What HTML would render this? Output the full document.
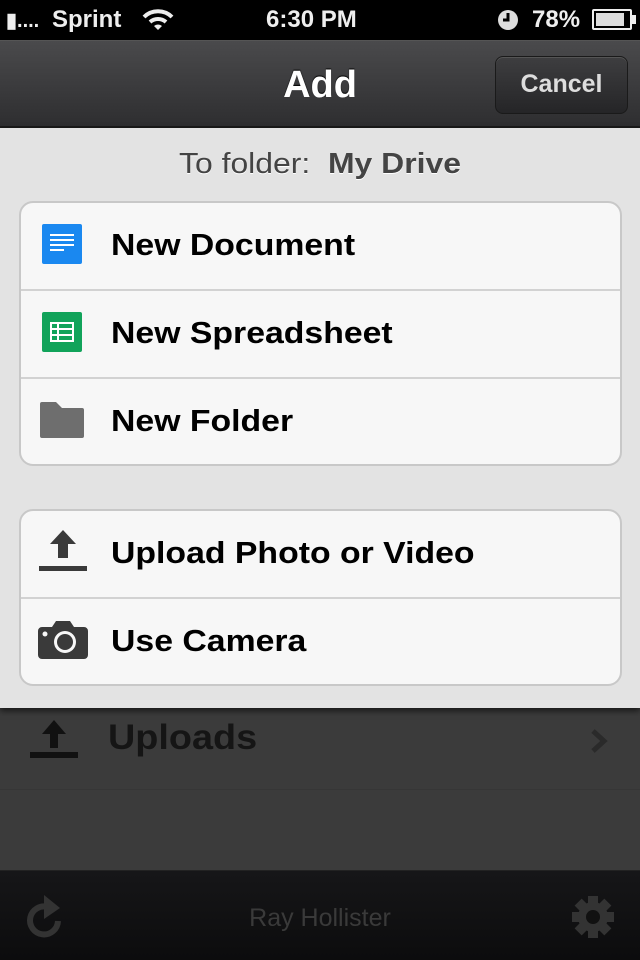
<!DOCTYPE html>
<html><head><meta charset="utf-8"><style>
*{margin:0;padding:0;box-sizing:border-box}
body{width:640px;height:960px;overflow:hidden;background:#3b3b3b;font-family:"Liberation Sans",sans-serif;position:relative}
.abs{position:absolute}
.status{left:0;top:0;width:640px;height:40px;background:#000;color:#eee;font-size:24px;font-weight:bold}
.nav{left:0;top:40px;width:640px;height:88px;background:linear-gradient(#4a4a4c,#2e2e30);border-top:1px solid #555;border-bottom:2px solid #1a1a1a}
.sheet{left:0;top:128px;width:640px;height:580px;background:#e3e3e3;box-shadow:0 3px 6px rgba(0,0,0,.6)}
.group{position:absolute;left:19px;width:603px;background:#f7f7f7;border:2px solid #c8c8c8;border-radius:14px;overflow:hidden}
.row{height:88px;border-bottom:2px solid #d2d2d2;position:relative}
.row:last-child{border-bottom:none}
.row .t{position:absolute;left:90px;top:24px;font-size:31px;font-weight:bold;color:#000;transform:scaleX(1.09);transform-origin:0 0;white-space:nowrap}
.row svg{position:absolute}
</style></head><body>
<div class="abs status">
 <span class="abs" style="left:6px;top:8px;font-size:20px">▮....</span>
 <span class="abs" style="left:52px;top:6px">Sprint</span>
 <svg class="abs" style="left:142px;top:8px" width="32" height="24" viewBox="0 0 32 24"><path d="M2 9a20 20 0 0 1 28 0" stroke="#eee" stroke-width="4" fill="none"/><path d="M8 14a12 12 0 0 1 16 0" stroke="#eee" stroke-width="4" fill="none"/><path d="M16 22l-4-4a6 6 0 0 1 8 0z" fill="#eee"/></svg>
 <span class="abs" style="left:266px;top:6px">6:30 PM</span>
 <svg class="abs" style="left:497px;top:9px" width="22" height="22"><circle cx="11" cy="11" r="10" fill="#ddd"/><path d="M11 4v7h-5" stroke="#000" stroke-width="3" fill="none"/></svg>
 <span class="abs" style="left:532px;top:6px">78%</span>
 <div class="abs" style="left:592px;top:9px;width:40px;height:21px;border:2px solid #eee;border-radius:2px"><div style="margin:2px;width:28px;height:13px;background:#ddd"></div></div>
 <div class="abs" style="left:632px;top:15px;width:4px;height:9px;background:#eee"></div>
</div>
<div class="abs nav">
 <div class="abs" style="left:0;width:640px;top:23px;text-align:center;color:#fff;font-size:38px;font-weight:bold;text-shadow:0 -1px 1px #000">Add</div>
 <div class="abs" style="left:495px;top:15px;width:133px;height:58px;border-radius:8px;background:linear-gradient(#3e3e40,#252527);border:1px solid #1a1a1a;box-shadow:inset 0 1px 0 #555;color:#ddd;font-size:25px;font-weight:bold;text-align:center;line-height:55px">Cancel</div>
</div>
<div class="abs" style="left:0;top:708px;width:640px;height:82px;border-bottom:1px solid #363636"></div>
<svg class="abs" style="left:30px;top:720px" width="48" height="40"><path d="M24 0L12 14h8v14h8V14h8z" fill="#111"/><rect x="0" y="32" width="48" height="6" fill="#111"/></svg>
<div class="abs" style="left:108px;top:718px;font-size:35px;font-weight:bold;color:#151515;transform:scaleX(1.08);transform-origin:0 0">Uploads</div>
<svg class="abs" style="left:588px;top:728px" width="24" height="26"><path d="M5 3l11 10-11 10" stroke="#2a2a2a" stroke-width="5" fill="none"/></svg>
<div class="abs" style="left:0;top:870px;width:640px;height:90px;background:linear-gradient(#161618,#0c0c0d);border-top:1px solid #222"></div>
<svg class="abs" style="left:24px;top:895px" width="44" height="46"><path d="M34 26a14 14 0 1 1-10-14" stroke="#333" stroke-width="6" fill="none"/><path d="M20 0l16 13-16 11z" fill="#333"/></svg>
<div class="abs" style="left:0;width:640px;top:904px;text-align:center;font-size:25px;color:#3a3a3a">Ray Hollister</div>
<svg class="abs" style="left:572px;top:896px" width="42" height="42" viewBox="0 0 42 42"><g fill="#333"><circle cx="21" cy="21" r="15"/><rect x="16" y="0" width="10" height="42"/><rect x="0" y="16" width="42" height="10"/><rect x="16" y="0" width="10" height="42" transform="rotate(45 21 21)"/><rect x="16" y="0" width="10" height="42" transform="rotate(-45 21 21)"/></g><circle cx="21" cy="21" r="7" fill="#111"/></svg>
<div class="abs sheet">
 <div class="abs" style="left:0;width:640px;top:20px;text-align:center;font-size:29px;color:#444;text-shadow:0 1px 0 #fff;transform:scaleX(1.1)">To folder:&nbsp; <b>My Drive</b></div>
 <div class="group" style="top:73px;height:265px">
  <div class="row"><svg style="left:21px;top:21px" width="40" height="40"><rect width="40" height="40" rx="2" fill="#1a88f0"/><g fill="#fff"><rect x="8" y="10" width="24" height="2"/><rect x="8" y="15" width="24" height="2"/><rect x="8" y="20" width="24" height="2"/><rect x="8" y="25" width="14" height="2"/></g></svg><span class="t">New Document</span></div>
  <div class="row"><svg style="left:21px;top:21px" width="40" height="40"><rect width="40" height="40" rx="2" fill="#11a35a"/><rect x="9" y="11" width="22" height="18" fill="none" stroke="#fff" stroke-width="2"/><path d="M9 17h22M9 23h22M16 11v18" stroke="#fff" stroke-width="2"/></svg><span class="t">New Spreadsheet</span></div>
  <div class="row"><svg style="left:19px;top:23px" width="44" height="36"><path d="M2 0h14l6 6h20a2 2 0 0 1 2 2v26a2 2 0 0 1-2 2H2a2 2 0 0 1-2-2V2a2 2 0 0 1 2-2z" fill="#6e6e6e"/></svg><span class="t">New Folder</span></div>
 </div>
 <div class="group" style="top:381px;height:177px">
  <div class="row"><svg style="left:17px;top:19px" width="50" height="44"><path d="M25 0L12 14h8v14h10V14h8z" fill="#3a3a3a"/><rect x="1" y="36" width="48" height="5" fill="#3a3a3a"/></svg><span class="t">Upload Photo or Video</span></div>
  <div class="row"><svg style="left:17px;top:22px" width="50" height="40"><path d="M4 6h10l4-6h14l4 6h10a4 4 0 0 1 4 4v24a4 4 0 0 1-4 4H4a4 4 0 0 1-4-4V10a4 4 0 0 1 4-4z" fill="#3a3a3a"/><circle cx="27" cy="21" r="11" fill="#f7f7f7"/><circle cx="27" cy="21" r="8" fill="#3a3a3a"/><circle cx="7" cy="13" r="2.5" fill="#f7f7f7"/></svg><span class="t">Use Camera</span></div>
 </div>
</div>
</body></html>
